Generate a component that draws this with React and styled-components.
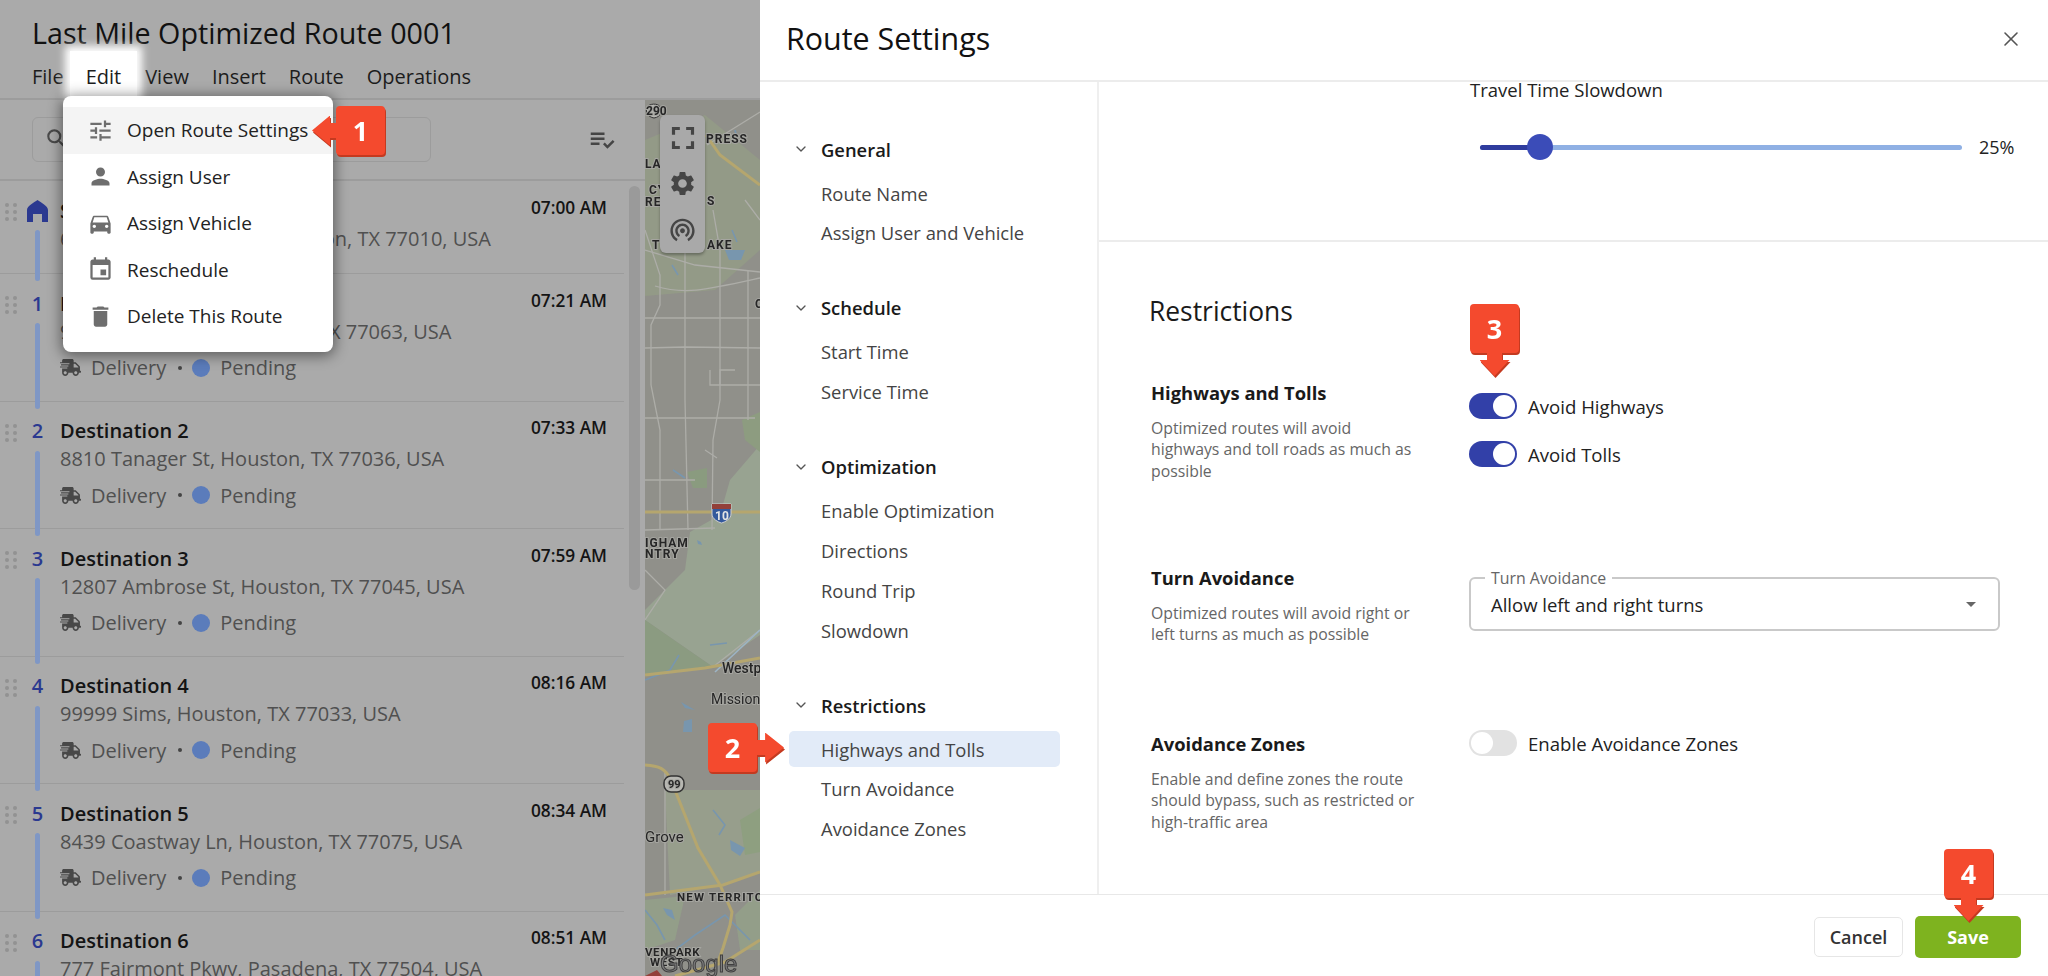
import styled, { createGlobalStyle } from 'styled-components';
import { MdTune, MdPerson, MdDirectionsCar, MdEvent, MdDelete, MdSearch, MdPlaylistAddCheck, MdFullscreen, MdSettings, MdWifiTethering } from 'react-icons/md';
import { FaShippingFast } from 'react-icons/fa';
import { ChevronDown, X } from 'lucide-react';

const stops = [
    { id: 1, name: 'Destination 1', address: '9100 Gessner Rd, Houston, TX 77063, USA', time: '07:21 AM' },
    { id: 2, name: 'Destination 2', address: '8810 Tanager St, Houston, TX 77036, USA', time: '07:33 AM' },
    { id: 3, name: 'Destination 3', address: '12807 Ambrose St, Houston, TX 77045, USA', time: '07:59 AM' },
    { id: 4, name: 'Destination 4', address: '99999 Sims, Houston, TX 77033, USA', time: '08:16 AM' },
    { id: 5, name: 'Destination 5', address: '8439 Coastway Ln, Houston, TX 77075, USA', time: '08:34 AM' },
    { id: 6, name: 'Destination 6', address: '777 Fairmont Pkwy, Pasadena, TX 77504, USA', time: '08:51 AM' },
];

const navGroups = [
    { title: 'General', items: ['Route Name', 'Assign User and Vehicle'] },
    { title: 'Schedule', items: ['Start Time', 'Service Time'] },
    { title: 'Optimization', items: ['Enable Optimization', 'Directions', 'Round Trip', 'Slowdown'] },
    { title: 'Restrictions', items: ['Highways and Tolls', 'Turn Avoidance', 'Avoidance Zones'] },
];

const menuItems = [
    { label: 'Open Route Settings', icon: MdTune, active: true },
    { label: 'Assign User', icon: MdPerson },
    { label: 'Assign Vehicle', icon: MdDirectionsCar },
    { label: 'Reschedule', icon: MdEvent },
    { label: 'Delete This Route', icon: MdDelete },
];

const Grip = () => (
    <GripSvg width="14" height="18" viewBox="0 0 14 18">
        {[2, 9, 16].map((cy) => [3, 11].map((cx) => <circle key={cx + '-' + cy} cx={cx} cy={cy} r="2" fill="#929292" />))}
    </GripSvg>
);

const HomeIcon = () => (
    <svg width="21" height="22" viewBox="0 0 21 22">
        <path d="M10.5 0 C14 2.5 21 6 21 10 V22 H15 V14 H6 V22 H0 V10 C0 6 7 2.5 10.5 0Z" fill="#2b3990" />
    </svg>
);

const MapDrawing = () => (
    <MapSvg width="115" height="876" viewBox="0 0 115 876">
        <rect width="115" height="876" fill="#90908a" />
        <path d="M0 40 L60 15 L115 60 L115 150 L70 190 L0 196Z" fill="#939a87" />
        <path d="M115 345 L85 380 L75 415 L45 432 L40 470 L0 510 L0 520 L68 567 L115 535Z" fill="#98a391" />
        <path d="M0 520 L68 567 L0 574Z" fill="#8b9b81" />
        <path d="M97 320 L115 312 L115 352 L100 340Z" fill="#8d9c80" />
        <path d="M42 372 L62 368 L62 388 L48 388Z" fill="#8a9b7f" />
        <path d="M20 690 L115 690 L115 772 L78 785 L25 795Z" fill="#979e8c" />
        <path d="M95 720 L115 708 L115 752 L100 755Z" fill="#8e9f80" />
        <path d="M0 800 L40 796 L30 840 L0 850Z M90 815 L115 790 L115 850 L95 850Z" fill="#939e89" />
        <g fill="none" stroke="#adada8" strokeWidth="1.3">
            <path d="M0 130 L15 175 L15 205 L6 225 L6 285 L15 330 L15 430 M40 150 L40 300 L43 430 M75 150 L75 300 L68 340 L67 430 M103 170 L103 320" />
            <path d="M10 186 C40 195 60 190 115 178 M0 218 L115 218 M0 248 L40 247 L115 248 M0 318 L110 318 M0 380 L50 380 M60 350 L72 358 M0 430 L70 428 M0 470 L20 490 L0 520" />
            <path d="M65 270 L65 285 L80 285 L115 285 M68 110 L75 150 M100 100 L115 120 M62 45 L115 12" />
            <path d="M0 150 L50 165 L115 172 M20 670 L20 795 M75 285 L75 270 L90 270 M68 567 L115 530" />
        </g>
        <g fill="none" stroke="#7896ae" strokeWidth="1.6">
            <path d="M27 165 L33 175 M90 30 L92 38 M87 130 L92 142 M28 370 L40 378 M0 580 L25 570 L34 555 M65 545 L82 543 M68 710 L80 725 L74 735 M0 810 L12 825 L20 840 M30 850 L50 835 L80 815 L105 840" />
            <path d="M115 530 L70 572" stroke="#9db4c5" />
        </g>
        <g fill="#7896ae">
            <path d="M80 150 L100 150 L96 160 L84 160Z" />
            <path d="M39 621 L47 619 L47 632 L38 632Z M36 602 L50 610 L40 608Z" />
            <path d="M85 740 L100 748 L95 756 L86 750Z M18 808 L27 810 L30 820 L22 815Z M52 440 L56 442 L57 445 L53 444Z" />
        </g>
        <g fill="none" stroke="#b5a66e" strokeWidth="3">
            <path d="M61 35 L75 55 L115 85" />
            <path d="M0 412 L115 412" />
            <path d="M0 575 L60 568 L115 558" />
            <path d="M0 665 C14 666 20 668 26 680 L53 748 L75 785 L87 812 L85 825 L78 848 L73 862" />
            <path d="M0 795 L78 785 L115 772 M30 876 L80 862 L115 840" />
        </g>
        <path d="M2 8 C3 3 14 3 15 7 C18 11 16 17 9 18 C3 17 0 12 2 8Z" fill="#b7b7b2" stroke="#333" strokeWidth="1" />
        <MapText x="1" y="15" size="12" spacing="0">290</MapText>
        <path d="M67 404 H86 V414 C86 419 80 422 76.5 423 C73 422 67 419 67 414Z" fill="#34599c" stroke="#cfcfcf" strokeWidth="1" />
        <path d="M67 404 H86 V409 H67Z" fill="#93403a" />
        <ShieldText x="70" y="420">10</ShieldText>
        <rect x="19" y="676" width="20" height="16" rx="7" fill="#b7b7b2" stroke="#333" strokeWidth="1.5" />
        <MapText x="23" y="688" size="11" spacing="0">99</MapText>
        <MapText x="61" y="43" size="12" spacing="1">PRESS</MapText>
        <MapText x="0" y="68" size="12" spacing="1">LAN</MapText>
        <MapText x="4" y="94" size="12" spacing="1">CY</MapText>
        <MapText x="0" y="106" size="12" spacing="1">REI</MapText>
        <MapText x="62" y="105" size="12" spacing="1">S</MapText>
        <MapText x="7" y="149" size="12" spacing="1">T</MapText>
        <MapText x="62" y="149" size="12" spacing="1">AKE</MapText>
        <MapText x="110" y="208" size="12" spacing="1">C</MapText>
        <MapText x="0" y="447" size="12" spacing="1">IGHAM</MapText>
        <MapText x="0" y="458" size="12" spacing="1">NTRY</MapText>
        <MapText x="77" y="573" size="14" spacing="0" weight="500">Westpark</MapText>
        <MapText x="66" y="604" size="14" spacing="0" weight="400">Mission</MapText>
        <MapText x="0" y="742" size="15" spacing="0" weight="400">Grove</MapText>
        <MapText x="32" y="801" size="11.5" spacing="1.2">NEW TERRITORY</MapText>
        <MapText x="0" y="856" size="11.5" spacing="0.6">VENPARK</MapText>
        <MapText x="5" y="866" size="11.5" spacing="0.6">WEST</MapText>
        <GoogleMark x="15" y="872">Google</GoogleMark>
        <path d="M0 876 L12 870 L17 876Z" fill="#93403a" />
    </MapSvg>
);

const App = () => {
    return (
        <>
            <GlobalStyle />
            <Page>
                <RoutePane>
                    <RouteHeader>
                        <RouteTitle>Last Mile Optimized Route 0001</RouteTitle>
                        <MenuBar>
                            <MenuBarItem>File</MenuBarItem>
                            <MenuBarItem $active>Edit</MenuBarItem>
                            <MenuBarItem>View</MenuBarItem>
                            <MenuBarItem>Insert</MenuBarItem>
                            <MenuBarItem>Route</MenuBarItem>
                            <MenuBarItem>Operations</MenuBarItem>
                        </MenuBar>
                    </RouteHeader>
                    <RouteBody>
                        <ListColumn>
                            <SearchRow>
                                <SearchBox>
                                    <MdSearch size={26} color="#4a4a4a" />
                                </SearchBox>
                                <MdPlaylistAddCheck size={30} color="#454545" />
                            </SearchRow>
                            <ListArea>
                                <StopList>
                                    <Stop $height={93}>
                                        <GripCell><Grip /></GripCell>
                                        <Rail>
                                            <HomeWrap><HomeIcon /></HomeWrap>
                                            <RailBar />
                                        </Rail>
                                        <StopContent>
                                            <StopHead>
                                                <StopName>Start Location</StopName>
                                                <StopTime>07:00 AM</StopTime>
                                            </StopHead>
                                            <StopAddress>6120 Harrisburg Blvd, Houston, TX 77010, USA</StopAddress>
                                        </StopContent>
                                    </Stop>
                                    {stops.map((stop) => (
                                        <Stop key={stop.id} $height={127.6}>
                                            <GripCell><Grip /></GripCell>
                                            <Rail>
                                                <StopNumber>{stop.id}</StopNumber>
                                                <RailBar />
                                            </Rail>
                                            <StopContent>
                                                <StopHead>
                                                    <StopName>{stop.name}</StopName>
                                                    <StopTime>{stop.time}</StopTime>
                                                </StopHead>
                                                <StopAddress>{stop.address}</StopAddress>
                                                <StopMeta>
                                                    <FaShippingFast size={21} color="#484848" />
                                                    <MetaText>Delivery</MetaText>
                                                    <MetaDot />
                                                    <StatusDot />
                                                    <MetaText>Pending</MetaText>
                                                </StopMeta>
                                            </StopContent>
                                        </Stop>
                                    ))}
                                </StopList>
                                <ScrollThumb />
                            </ListArea>
                        </ListColumn>
                        <MapArea>
                            <MapDrawing />
                            <MapControls>
                                <MdFullscreen size={38} color="#454545" />
                                <MdSettings size={29} color="#454545" />
                                <MdWifiTethering size={29} color="#454545" />
                            </MapControls>
                        </MapArea>
                    </RouteBody>
                    <Dropdown>
                        {menuItems.map((item) => (
                            <DropdownItem key={item.label} $active={item.active}>
                                <item.icon size={27} color="#6e6e6e" />
                                <span>{item.label}</span>
                            </DropdownItem>
                        ))}
                    </Dropdown>
                </RoutePane>

                <SettingsPane>
                    <SettingsHeader>
                        <SettingsTitle>Route Settings</SettingsTitle>
                        <X size={24} strokeWidth={1.6} color="#555" />
                    </SettingsHeader>
                    <SettingsBody>
                        <Nav>
                            {navGroups.map((group) => (
                                <NavGroup key={group.title}>
                                    <NavHeading>
                                        <ChevronDown size={16} color="#555" />
                                        {group.title}
                                    </NavHeading>
                                    {group.items.map((item) => (
                                        <NavItem key={item} $active={item === 'Highways and Tolls'}>{item}</NavItem>
                                    ))}
                                </NavGroup>
                            ))}
                        </Nav>
                        <Content>
                            <SlowdownPanel>
                                <SlowdownLabel>Travel Time Slowdown</SlowdownLabel>
                                <SliderRow>
                                    <SliderTrack>
                                        <SliderFill />
                                        <SliderThumb />
                                    </SliderTrack>
                                    <SliderValue>25%</SliderValue>
                                </SliderRow>
                            </SlowdownPanel>
                            <Restrictions>
                                <SectionTitle>Restrictions</SectionTitle>
                                <SettingRow $height={185}>
                                    <div>
                                        <SettingName>Highways and Tolls</SettingName>
                                        <SettingDesc>Optimized routes will avoid highways and toll roads as much as possible</SettingDesc>
                                    </div>
                                    <SettingControls $top={12}>
                                        <ToggleRow><Toggle $on><Knob /></Toggle>Avoid Highways</ToggleRow>
                                        <ToggleRow><Toggle $on><Knob /></Toggle>Avoid Tolls</ToggleRow>
                                    </SettingControls>
                                </SettingRow>
                                <SettingRow $height={166}>
                                    <div>
                                        <SettingName>Turn Avoidance</SettingName>
                                        <SettingDesc>Optimized routes will avoid right or left turns as much as possible</SettingDesc>
                                    </div>
                                    <SettingControls $top={11}>
                                        <SelectBox>
                                            <SelectLabel>Turn Avoidance</SelectLabel>
                                            Allow left and right turns
                                            <SelectCaret />
                                        </SelectBox>
                                    </SettingControls>
                                </SettingRow>
                                <SettingRow>
                                    <div>
                                        <SettingName>Avoidance Zones</SettingName>
                                        <SettingDesc>Enable and define zones the route should bypass, such as restricted or high-traffic area</SettingDesc>
                                    </div>
                                    <SettingControls $top={-2}>
                                        <ToggleRow><Toggle><Knob /></Toggle>Enable Avoidance Zones</ToggleRow>
                                    </SettingControls>
                                </SettingRow>
                            </Restrictions>
                        </Content>
                    </SettingsBody>
                    <SettingsFooter>
                        <CancelButton>Cancel</CancelButton>
                        <SaveButton>Save</SaveButton>
                    </SettingsFooter>
                </SettingsPane>

                <Callout $x={312} $y={106} $dir="left"><CalloutBody>1</CalloutBody><CalloutArrow $dir="left" /></Callout>
                <Callout $x={708} $y={723} $dir="right"><CalloutBody>2</CalloutBody><CalloutArrow $dir="right" /></Callout>
                <Callout $x={1470} $y={304} $dir="down"><CalloutBody>3</CalloutBody><CalloutArrow $dir="down" /></Callout>
                <Callout $x={1944} $y={849} $dir="down"><CalloutBody>4</CalloutBody><CalloutArrow $dir="down" /></Callout>
            </Page>
        </>
    );
};

const GlobalStyle = createGlobalStyle`
html, body { margin:0; padding:0; background:#fff; }
body { font-family:"Open Sans", "Liberation Sans", sans-serif; color:#222; }
* { box-sizing:border-box; }
`;
const Page = styled.div`
position:relative;
display:flex;
width:2048px; height:976px;
overflow:hidden;
`;

/* left side, dimmed behind the settings drawer */
const RoutePane = styled.div`
position:relative;
display:flex;
flex-direction:column;
flex:0 0 760px;
background:#aaaaaa;
`;
const RouteHeader = styled.div`
flex:0 0 100px;
padding:15px 0 0 32px;
border-bottom:2px solid #9c9c9c;
`;
const RouteTitle = styled.div`
font-size:28.7px;
line-height:36px;
color:#111;
`;
const MenuBar = styled.div`
display:flex;
gap:23px;
margin-top:13px;
`;
const MenuBarItem = styled.div`
position:relative;
font-size:20px;
line-height:26px;
color:#1c1c1c;
${p=>p.$active && `
    background:#fff;
    padding:13px 16px 7px;
    margin:-13px -15px -7px -17px;
    box-shadow:0 0 8px 5px #fff;
    z-index:1;
`}
`;
const RouteBody = styled.div`
display:flex;
flex:1;
min-height:0;
`;
const ListColumn = styled.div`
display:flex;
flex-direction:column;
flex:0 0 645px;
`;
const SearchRow = styled.div`
display:flex;
align-items:center;
justify-content:space-between;
flex:0 0 81px;
padding:0 28px 0 32px;
border-bottom:2px solid #9c9c9c;
`;
const SearchBox = styled.div`
display:flex;
align-items:center;
width:399px; height:45px;
padding-left:11px;
border:1px solid #9c9c9c;
border-radius:6px;
margin-top:-1px;
`;
const ListArea = styled.div`
display:flex;
flex:1;
min-height:0;
overflow:hidden;
`;
const StopList = styled.div`
flex:0 0 624px;
`;
const Stop = styled.div`
display:flex;
height:${p=>p.$height}px;
border-bottom:1px solid #9c9c9c;
`;
const GripCell = styled.div`
flex:0 0 23px;
padding:22px 0 0 4px;
`;
const GripSvg = styled.svg`
display:block;
`;
const Rail = styled.div`
display:flex;
flex-direction:column;
align-items:center;
flex:0 0 29px;
padding-top:16.5px;
margin-bottom:-8px;
position:relative;
`;
const HomeWrap = styled.div`
height:26px;
padding-top:2.5px;
`;
const StopNumber = styled.div`
height:26px;
font-size:20px;
line-height:26px;
font-weight:600;
color:#2b3990;
`;
const RailBar = styled.div`
flex:1;
width:5px;
margin-top:6.5px;
background:#7f97c5;
border-radius:3px;
`;
const StopContent = styled.div`
flex:1;
padding:16.5px 17px 0 8px;
`;
const StopHead = styled.div`
display:flex;
justify-content:space-between;
height:26px;
`;
const StopName = styled.div`
font-size:20px;
line-height:26px;
font-weight:600;
color:#141414;
`;
const StopTime = styled.div`
font-size:17.3px;
line-height:20px;
font-weight:600;
color:#141414;
`;
const StopAddress = styled.div`
margin-top:1px;
font-size:20px;
line-height:28px;
color:#505050;
white-space:nowrap;
`;
const StopMeta = styled.div`
display:flex;
align-items:center;
height:28px;
margin-top:8px;
`;
const MetaText = styled.span`
font-size:20px;
color:#505050;
margin-left:10px;
`;
const MetaDot = styled.span`
width:4px; height:4px;
margin-left:12px;
border-radius:50%;
background:#444;
`;
const StatusDot = styled.span`
width:18px; height:18px;
margin-left:10px;
border-radius:50%;
background:#5b7cbb;
`;
const ScrollThumb = styled.div`
flex:0 0 11px;
height:404px;
margin:5px 0 0 5px;
border-radius:6px;
background:#9a9a9a;
`;
const MapArea = styled.div`
position:relative;
flex:1;
overflow:hidden;
line-height:0;
`;
const MapSvg = styled.svg`
filter:blur(0.5px);
`;
const MapText = styled.text.attrs(p=>({
    fontSize: p.size || 11,
    letterSpacing: p.spacing,
    fontWeight: p.weight || 700,
}))`
font-family:Roboto, "Liberation Sans", sans-serif;
fill:#262626;
stroke:#a5a5a0;
stroke-width:2px;
paint-order:stroke;
`;
const ShieldText = styled.text`
font-family:Roboto, "Liberation Sans", sans-serif;
font-size:12px;
font-weight:700;
fill:#e4e4e4;
`;
const GoogleMark = styled.text`
font-family:"Liberation Sans", sans-serif;
font-size:24px;
fill:#7e7e7e;
stroke:#3f3f3f;
stroke-width:1px;
`;
const MapControls = styled.div`
position:absolute;
left:15px; top:15px;
display:flex;
flex-direction:column;
align-items:center;
justify-content:space-between;
width:45px; height:138px;
padding:4px 0 9px;
background:#a9a9a9;
border-radius:6px;
box-shadow:0 2px 3px rgba(0,0,0,.3);
svg:nth-child(2) { margin-bottom:5px; }
`;
const Dropdown = styled.div`
position:absolute;
left:63px; top:96px;
width:270px; height:256px;
padding-top:11px;
background:#fff;
border-radius:8px;
box-shadow:0 2px 14px 2px rgba(0,0,0,.45);
z-index:2;
`;
const DropdownItem = styled.div`
display:flex;
align-items:center;
gap:13px;
height:46.5px;
padding-left:24px;
font-size:19px;
color:#222;
background:${p=>p.$active ? '#f4f4f4' : 'transparent'};
`;

/* right side, the settings drawer */
const SettingsPane = styled.div`
display:flex;
flex-direction:column;
flex:1;
background:#fff;
`;
const SettingsHeader = styled.div`
display:flex;
align-items:center;
justify-content:space-between;
flex:0 0 82px;
padding:0 25px 3px 26px;
border-bottom:2px solid #ececec;
`;
const SettingsTitle = styled.div`
font-size:30.4px;
color:#111;
`;
const SettingsBody = styled.div`
display:flex;
flex:1;
min-height:0;
`;
const Nav = styled.div`
flex:0 0 339px;
padding:49px 0 0 29px;
border-right:2px solid #efefef;
`;
const NavGroup = styled.div`
width:271px;
padding-bottom:35.6px;
`;
const NavHeading = styled.div`
display:flex;
align-items:center;
gap:12px;
height:36px;
padding-left:4px;
margin-bottom:8px;
font-size:18.4px;
font-weight:600;
color:#1a1a1a;
`;
const NavItem = styled.div`
display:flex;
align-items:center;
height:36px;
margin-bottom:3.7px;
padding-left:32px;
font-size:18.4px;
color:#444;
border-radius:5px;
background:${p=>p.$active ? '#e2ebf8' : 'transparent'};
`;
const Content = styled.div`
flex:1;
display:flex;
flex-direction:column;
`;
const SlowdownPanel = styled.div`
flex:0 0 160px;
padding-left:371px;
border-bottom:2px solid #ececec;
`;
const SlowdownLabel = styled.div`
margin-top:-2px;
font-size:18.5px;
line-height:20px;
color:#222;
`;
const SliderRow = styled.div`
display:flex;
align-items:center;
height:26px;
margin:34px 0 0 10px;
`;
const SliderTrack = styled.div`
position:relative;
flex:0 0 482px;
height:5px;
border-radius:3px;
background:#8fb0e4;
`;
const SliderFill = styled.div`
width:60px; height:100%;
border-radius:3px 0 0 3px;
background:#2f3c9e;
`;
const SliderThumb = styled.div`
position:absolute;
left:47px; top:-11px;
width:26px; height:26px;
border-radius:50%;
background:#3b4cb8;
`;
const SliderValue = styled.div`
margin-left:17px;
font-size:18px;
color:#222;
`;
const Restrictions = styled.div`
flex:1;
padding:51px 0 0 52px;
`;
const SectionTitle = styled.div`
margin:0 0 52px -2px;
font-size:26.4px;
line-height:36px;
color:#1a1a1a;
`;
const SettingRow = styled.div`
display:grid;
grid-template-columns:318px 1fr;
height:${p=>p.$height ? p.$height + 'px' : 'auto'};
`;
const SettingName = styled.div`
font-size:18.4px;
line-height:24px;
font-weight:700;
color:#1a1a1a;
`;
const SettingDesc = styled.div`
width:268px;
margin-top:13px;
font-size:15.8px;
line-height:21.3px;
color:#666;
`;
const SettingControls = styled.div`
display:flex;
flex-direction:column;
gap:22px;
margin-top:${p=>p.$top}px;
`;
const ToggleRow = styled.div`
display:flex;
align-items:center;
gap:11px;
height:26px;
font-size:18.6px;
color:#222;
`;
const Toggle = styled.div`
display:flex;
justify-content:${p=>p.$on ? 'flex-end' : 'flex-start'};
align-items:center;
width:48px; height:26px;
padding:0 2px;
border-radius:13px;
background:${p=>p.$on ? '#3240a8' : '#e2e2e2'};
`;
const Knob = styled.div`
width:22px; height:22px;
border-radius:50%;
background:#fff;
`;
const SelectBox = styled.div`
position:relative;
display:flex;
align-items:center;
width:531px; height:54px;
padding-left:20px;
font-size:18.5px;
color:#222;
border:2px solid #c9c9c9;
border-radius:6px;
`;
const SelectLabel = styled.span`
position:absolute;
left:14px; top:-11px;
padding:0 6px;
font-size:15.9px;
line-height:20px;
color:#666;
background:#fff;
`;
const SelectCaret = styled.span`
position:absolute;
right:22px; top:23px;
border-left:5px solid transparent;
border-right:5px solid transparent;
border-top:5px solid #666;
`;
const SettingsFooter = styled.div`
display:flex;
align-items:center;
justify-content:flex-end;
gap:12px;
flex:0 0 82px;
padding:3px 27px 0 0;
border-top:1px solid #e8e8e8;
`;
const CancelButton = styled.button`
width:89px; height:40px;
font:600 18px "Open Sans", sans-serif;
color:#333;
background:#fff;
border:1px solid #e6e6e6;
border-radius:5px;
`;
const SaveButton = styled.button`
width:106px; height:42px;
font:700 18px "Open Sans", sans-serif;
color:#fff;
background:#7eb31f;
border:0;
border-radius:5px;
`;

/* numbered red callouts placed over the screenshot */
const Callout = styled.div`
position:absolute;
left:${p=>p.$x}px; top:${p=>p.$y}px;
display:flex;
flex-direction:${p=>p.$dir==='down' ? 'column' : p.$dir==='left' ? 'row-reverse' : 'row'};
align-items:center;
filter:drop-shadow(1px 2px 0 #c43a20);
z-index:3;
`;
const CalloutBody = styled.div`
display:flex;
align-items:center;
justify-content:center;
width:49px; height:49px;
font-size:27px;
font-weight:700;
color:#fff;
background:#f44a2e;
border-radius:4px;
`;
const CalloutArrow = styled.div`
background:#f44a2e;
${p=>p.$dir==='down' ? `
    width:30px; height:23px;
    clip-path:polygon(25% 0, 75% 0, 75% 30%, 100% 30%, 50% 100%, 0 30%, 25% 30%);
` : p.$dir==='left' ? `
    width:24px; height:30px;
    clip-path:polygon(100% 25%, 75% 25%, 75% 0, 0 50%, 75% 100%, 75% 75%, 100% 75%);
` : `
    width:27px; height:30px;
    clip-path:polygon(0 25%, 30% 25%, 30% 0, 100% 50%, 30% 100%, 30% 75%, 0 75%);
`}
`;

export default App;
